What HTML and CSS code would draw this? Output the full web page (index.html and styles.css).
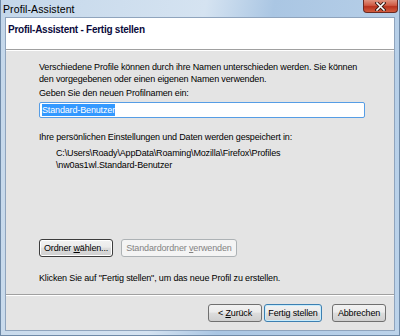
FILE: index.html
```html
<!DOCTYPE html>
<html>
<head>
  <title>Profil-Assistent</title>
  <link rel="stylesheet" href="styles.css">
</head>
<body>
  <div class="window">
    <div class="title-bar">
      <span class="title">Profil-Assistent</span>
      <button class="close-button">
        <svg width="11" height="9" viewBox="0 0 11 9">
          <path d="M2 1 L9 8 M9 1 L2 8" stroke="#3a1a14" stroke-width="3.4" stroke-linecap="square"/>
          <path d="M2 1 L9 8 M9 1 L2 8" stroke="#fff" stroke-width="1.6" stroke-linecap="square"/>
        </svg>
      </button>
    </div>
    <div class="client">
      <div class="wizard-header">
        <h1>Profil-Assistent - Fertig stellen</h1>
      </div>
      <div class="wizard-body">
        <p class="intro">Verschiedene Profile können durch ihre Namen unterschieden werden. Sie können<br>den vorgegebenen oder einen eigenen Namen verwenden.</p>
        <label for="profileName">Geben Sie den neuen Profilnamen ein:</label>
        <div class="name-input" id="profileName"><span class="selected">Standard-Benutzer</span></div>
        <p class="storage-label">Ihre persönlichen Einstellungen und Daten werden gespeichert in:</p>
        <p class="storage-path">C:\Users\Roady\AppData\Roaming\Mozilla\Firefox\Profiles<br>\nw0as1wl.Standard-Benutzer</p>
        <div class="spacer"></div>
        <div class="folder-buttons">
          <button class="btn btn-default">Ordner <u>w</u>ählen...</button>
          <button class="btn" disabled>Standardordner <u>v</u>erwenden</button>
        </div>
        <p class="finish-hint">Klicken Sie auf "Fertig stellen", um das neue Profil zu erstellen.</p>
      </div>
      <div class="wizard-footer">
        <button class="btn btn-nav">&lt; <u>Z</u>urück</button>
        <button class="btn btn-nav btn-focus">Fertig stellen</button>
        <button class="btn btn-nav btn-cancel">Abbrechen</button>
      </div>
    </div>
  </div>
</body>
</html>
```

FILE: styles.css
```css
body {
  margin: 0;
  padding: 0;
  font-family: "Liberation Sans", Arial, sans-serif;
  font-size: 9px;
  letter-spacing: -0.15px;
  color: #000;
}

.window {
  width: 400px;
  height: 336px;
  box-sizing: border-box;
  display: flex;
  flex-direction: column;
  background: linear-gradient(100deg, #c4d7ea 0%, #d5e3f1 45%, #aac6e3 60%, #bcd3ea 100%);
  padding: 0 4px 4px 4px;
  border: 1px solid #6f8aa8;
  border-top: none;
}

.title-bar {
  height: 17px;
  display: flex;
  align-items: center;
  justify-content: space-between;
  position: relative;
}

.title {
  font-size: 10.5px;
  letter-spacing: 0.1px;
  margin-left: -2px;
  color: #000;
}

.close-button {
  position: absolute;
  right: -3px;
  top: 0;
  width: 35px;
  height: 13px;
  border: 1px solid #6b2a22;
  border-top: none;
  border-radius: 0 0 4px 4px;
  background: linear-gradient(#e0937f 0%, #cf5a43 45%, #b8321d 55%, #d35d3f 100%);
  padding: 0;
  display: flex;
  align-items: center;
  justify-content: center;
}

.client {
  flex: 1;
  display: flex;
  flex-direction: column;
  background: #e4e4e4;
  border: 1px solid #8fa4bd;
}

.wizard-header {
  background: #fff;
  height: 32px;
  border-bottom: 1px solid #a0a0a0;
  box-shadow: 0 1px 0 #fff;
  padding: 6px 0 0 2px;
  box-sizing: border-box;
}

.wizard-header h1 {
  margin: 0;
  font-size: 10px;
  font-weight: bold;
  letter-spacing: -0.25px;
  color: #0a0a3c;
}

.wizard-body {
  flex: 1;
  display: flex;
  flex-direction: column;
  padding: 11px 20px 0 33px;
  white-space: nowrap;
}

.wizard-body p {
  margin: 0;
  line-height: 12px;
}

.intro {
  margin-bottom: 2px !important;
}

label {
  display: block;
  line-height: 12px;
  margin-bottom: 3px;
}

.name-input {
  width: 326px;
  height: 16px;
  box-sizing: border-box;
  background: #fff;
  border: 1px solid #569de5;
  border-radius: 2px;
  padding: 2px 2px;
  line-height: 11px;
  margin-bottom: 13px;
}

.name-input .selected {
  background: #3399ff;
  color: #fff;
  padding: 1px 0;
}

.storage-label {
  margin-bottom: 4px !important;
}

.storage-path {
  padding-left: 17px;
}

.spacer {
  flex: 1;
}

.folder-buttons {
  display: flex;
  gap: 8px;
  margin-bottom: 15px;
}

.btn {
  font-family: "Liberation Sans", Arial, sans-serif;
  font-size: 9px;
  letter-spacing: -0.15px;
  height: 18px;
  padding: 0 4px;
  border: 1px solid #707070;
  border-radius: 3px;
  background: linear-gradient(#f2f2f2 0%, #ebebeb 45%, #dddddd 50%, #cfcfcf 100%);
  color: #000;
}

.btn-default {
  box-shadow: inset 0 0 0 1px #fff;
  border-color: #3c3c3c;
}

.btn:disabled {
  background: #f4f4f4;
  border-color: #adb2b5;
  color: #838383;
}

.finish-hint {
  margin-bottom: 10px !important;
}

.wizard-footer {
  height: 35px;
  border-top: 1px solid #a0a0a0;
  box-shadow: inset 0 1px 0 #fff;
  display: flex;
  justify-content: flex-end;
  align-items: center;
  padding: 0 8px 0 0;
  gap: 2px;
}

.btn-nav {
  width: 54px;
  padding: 0;
}

.btn-focus {
  width: 58px;
  border-color: #3c7fb1;
  box-shadow: inset 0 0 0 1px #c8ecfc;
  margin-right: 8px;
}
```
